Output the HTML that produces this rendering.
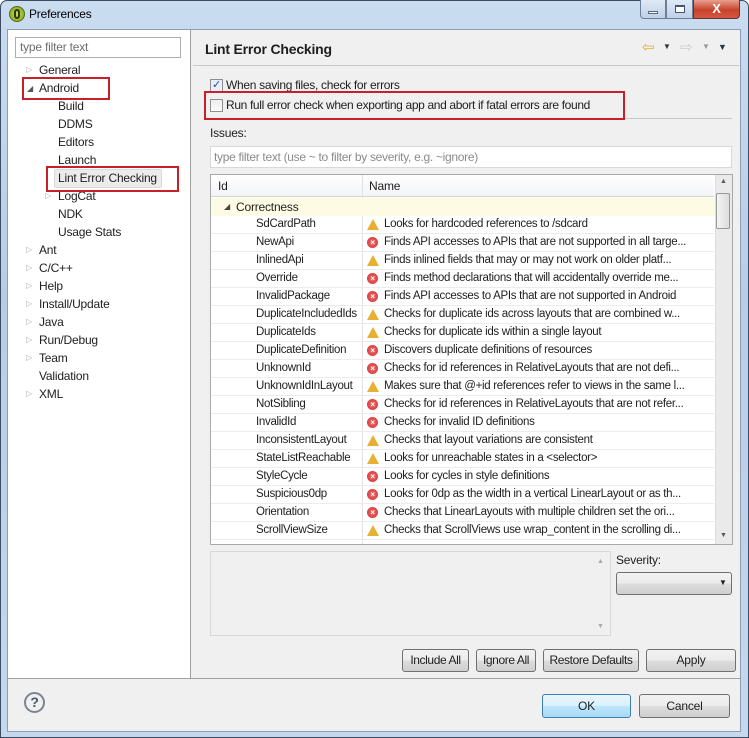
<!DOCTYPE html>
<html><head><style>
*{box-sizing:border-box;margin:0;padding:0}
body{width:749px;height:738px;position:relative;overflow:hidden;background:#fff;font-family:"Liberation Sans",sans-serif;font-size:12px;letter-spacing:-0.2px;color:#1e1e1e}
.a{position:absolute;white-space:nowrap}
.frame{left:0;top:0;width:749px;height:738px;background:linear-gradient(#c9dcf0,#b7cde6 40%,#c4d8ee);border:1px solid #3c4d63;border-radius:7px 7px 0 0}
.btn{position:absolute;border:1px solid #707070;border-radius:3px;background:linear-gradient(#f2f2f2,#ebebeb 50%,#dddddd 51%,#cfcfcf);text-align:center;font-size:12px;white-space:nowrap}
.row{position:absolute;left:211px;width:503px;height:18px;border-bottom:1px solid #ececec;white-space:nowrap;font-size:11.5px;letter-spacing:-0.3px}
.row .id{position:absolute;left:45px;top:2px;width:106px;overflow:hidden}
.row .nm{position:absolute;left:173px;top:2px;width:330px;overflow:hidden}
.ic{position:absolute;left:156px;top:3px;width:11px;height:11px}
</style></head><body>
<div class="a frame"></div>
<div class="a" style="left:9px;top:6px;width:16px;height:16px;border-radius:50%;background:radial-gradient(#c8e05a,#7a9a1a);border:1px solid #556b10"></div>
<div class="a" style="left:14px;top:9px;width:6px;height:10px;border:2px solid #2d3a08;border-radius:3px"></div>
<div class="a" style="left:29px;top:7px;font-size:12px;color:#000">Preferences</div>
<div class="a" style="left:640px;top:0;width:26px;height:19px;border:1px solid #6b7f99;border-top:none;border-radius:0 0 0 4px;background:linear-gradient(#dfe9f5,#bfd1e8)"></div>
<div class="a" style="left:648px;top:11px;width:10px;height:3px;background:#fff;border:1px solid #55667d"></div>
<div class="a" style="left:666px;top:0;width:27px;height:19px;border:1px solid #6b7f99;border-top:none;background:linear-gradient(#dfe9f5,#bfd1e8)"></div>
<div class="a" style="left:675px;top:5px;width:10px;height:8px;border:1px solid #44556b;border-top-width:2px;background:#fff"></div>
<div class="a" style="left:693px;top:0;width:47px;height:19px;border:1px solid #6b3030;border-top:none;border-radius:0 0 4px 0;background:linear-gradient(#e8a08f,#c8432b 55%,#d3583f);color:#fff;font-weight:bold;text-align:center;font-size:13px;line-height:17px">X</div>
<div class="a" style="left:7px;top:29px;width:734px;height:703px;background:#f0f0f0;border:1px solid #8d9db3"></div>
<div class="a" style="left:8px;top:30px;width:183px;height:648px;background:#fff;border-right:1px solid #a0a0a0"></div>
<div class="a" style="left:8px;top:678px;width:733px;height:1px;background:#a0a0a0"></div>
<div class="a" style="left:15px;top:37px;width:166px;height:21px;border:1px solid #abadb3;background:#fff;color:#6d6d6d;padding:2px 4px">type filter text</div>
<div>
<div class="a" style="left:26px;top:65px;color:#aaa;font-size:8px">▷</div><div class="a" style="left:39px;top:63px">General</div>
<div class="a" style="left:27px;top:84px;color:#555;font-size:8px">◢</div><div class="a" style="left:39px;top:81px">Android</div>
<div class="a" style="left:58px;top:99px">Build</div>
<div class="a" style="left:58px;top:117px">DDMS</div>
<div class="a" style="left:58px;top:135px">Editors</div>
<div class="a" style="left:58px;top:153px">Launch</div>
<div class="a" style="left:54px;top:169px;width:108px;height:19px;background:#ececec;border:1px solid #dadada;border-radius:2px"></div>
<div class="a" style="left:58px;top:171px">Lint Error Checking</div>
<div class="a" style="left:45px;top:191px;color:#aaa;font-size:8px">▷</div><div class="a" style="left:58px;top:189px">LogCat</div>
<div class="a" style="left:58px;top:207px">NDK</div>
<div class="a" style="left:58px;top:225px">Usage Stats</div>
<div class="a" style="left:26px;top:245px;color:#aaa;font-size:8px">▷</div><div class="a" style="left:39px;top:243px">Ant</div>
<div class="a" style="left:26px;top:263px;color:#aaa;font-size:8px">▷</div><div class="a" style="left:39px;top:261px">C/C++</div>
<div class="a" style="left:26px;top:281px;color:#aaa;font-size:8px">▷</div><div class="a" style="left:39px;top:279px">Help</div>
<div class="a" style="left:26px;top:299px;color:#aaa;font-size:8px">▷</div><div class="a" style="left:39px;top:297px">Install/Update</div>
<div class="a" style="left:26px;top:317px;color:#aaa;font-size:8px">▷</div><div class="a" style="left:39px;top:315px">Java</div>
<div class="a" style="left:26px;top:335px;color:#aaa;font-size:8px">▷</div><div class="a" style="left:39px;top:333px">Run/Debug</div>
<div class="a" style="left:26px;top:353px;color:#aaa;font-size:8px">▷</div><div class="a" style="left:39px;top:351px">Team</div>
<div class="a" style="left:39px;top:369px">Validation</div>
<div class="a" style="left:26px;top:389px;color:#aaa;font-size:8px">▷</div><div class="a" style="left:39px;top:387px">XML</div>
</div>
<div class="a" style="left:22px;top:77px;width:88px;height:23px;border:2px solid #c8202a"></div>
<div class="a" style="left:46px;top:166px;width:133px;height:26px;border:2px solid #c8202a"></div>
<div class="a" style="left:205px;top:41px;font-size:14px;font-weight:bold">Lint Error Checking</div>
<div class="a" style="left:642px;top:38px;color:#e0b030;font-size:15px">⇦</div>
<div class="a" style="left:663px;top:42px;font-size:8px;color:#333">▼</div>
<div class="a" style="left:680px;top:38px;color:#ccc;font-size:15px">⇨</div>
<div class="a" style="left:702px;top:42px;font-size:8px;color:#999">▼</div>
<div class="a" style="left:718px;top:42px;font-size:9px;color:#2b3550">▼</div>
<div class="a" style="left:193px;top:65px;width:546px;height:1px;background:#c8c8c8"></div>
<div class="a" style="left:210px;top:79px;width:13px;height:13px;border:1px solid #8f8f8f;background:#e8eefa;color:#1f4ca0;font-size:11px;line-height:11px;text-align:center">✓</div>
<div class="a" style="left:226px;top:78px;letter-spacing:-0.3px">When saving files, check for errors</div>
<div class="a" style="left:210px;top:99px;width:13px;height:13px;border:1px solid #8f8f8f;background:linear-gradient(#eee,#fafafa)"></div>
<div class="a" style="left:226px;top:98px;letter-spacing:-0.35px">Run full error check when exporting app and abort if fatal errors are found</div>
<div class="a" style="left:204px;top:91px;width:421px;height:29px;border:2px solid #c8202a"></div>
<div class="a" style="left:625px;top:118px;width:107px;height:1px;background:#c8c8c8"></div>
<div class="a" style="left:210px;top:126px">Issues:</div>
<div class="a" style="left:210px;top:146px;width:522px;height:22px;border:1px solid #d8d8d8;background:#fff;color:#8a8a8a;padding:3px 3px;letter-spacing:-0.3px">type filter text (use ~ to filter by severity, e.g. ~ignore)</div>
<div class="a" style="left:210px;top:174px;width:523px;height:371px;border:1px solid #a8a8a8;background:#fff;overflow:hidden"></div>
<div class="a" style="left:211px;top:175px;width:503px;height:22px;background:linear-gradient(#fff,#f3f4f6);border-bottom:1px solid #d5d5d5"></div>
<div class="a" style="left:362px;top:175px;width:1px;height:369px;background:#e2e2e2"></div>
<div class="a" style="left:218px;top:179px">Id</div>
<div class="a" style="left:369px;top:179px">Name</div>
<div class="a" style="left:715px;top:175px;width:17px;height:369px;background:#eaeaea;border-left:1px solid #ddd"></div>
<div class="a" style="left:720px;top:178px;font-size:7px;color:#555">▲</div>
<div class="a" style="left:716px;top:193px;width:14px;height:36px;border:1px solid #9a9a9a;border-radius:2px;background:linear-gradient(90deg,#f4f4f4,#dcdcdc)"></div>
<div class="a" style="left:720px;top:532px;font-size:7px;color:#555">▼</div>
<div class="a" style="left:211px;top:198px;width:504px;height:18px;background:#fdfbe4"></div>
<div class="a" style="left:224px;top:202px;font-size:8px;color:#444">◢</div>
<div class="a" style="left:236px;top:200px">Correctness</div>
<div id="rows"></div>
<div class="a" style="left:210px;top:551px;width:401px;height:85px;border:1px solid #d8d8d8;background:#f0f0f0"></div>
<div class="a" style="left:597px;top:558px;font-size:7px;color:#aaa">▲</div>
<div class="a" style="left:597px;top:623px;font-size:7px;color:#aaa">▼</div>
<div class="a" style="left:616px;top:553px">Severity:</div>
<div class="btn" style="left:616px;top:572px;width:116px;height:23px;border-radius:3px"></div>
<div class="a" style="left:719px;top:578px;font-size:8px">▼</div>
<div class="btn" style="left:402px;top:649px;width:67px;height:23px;line-height:21px;letter-spacing:-0.4px">Include All</div>
<div class="btn" style="left:476px;top:649px;width:60px;height:23px;line-height:21px;letter-spacing:-0.4px">Ignore All</div>
<div class="btn" style="left:543px;top:649px;width:96px;height:23px;line-height:21px;letter-spacing:-0.4px">Restore Defaults</div>
<div class="btn" style="left:646px;top:649px;width:90px;height:23px;line-height:21px">Apply</div>
<div class="a" style="left:24px;top:692px;width:21px;height:21px;border-radius:50%;border:2px solid #7a8494;color:#4a5568;font-weight:bold;font-size:14px;text-align:center;line-height:17px">?</div>
<div class="btn" style="left:542px;top:694px;width:89px;height:24px;line-height:22px;border-color:#3c7fb1;background:linear-gradient(#eaf6fd,#d9f0fc 50%,#bee6fd 51%,#a7d9f5)">OK</div>
<div class="btn" style="left:639px;top:694px;width:91px;height:24px;line-height:22px">Cancel</div>
<script>
var R=[["SdCardPath",0,"Looks for hardcoded references to /sdcard"],["NewApi",1,"Finds API accesses to APIs that are not supported in all targe..."],["InlinedApi",0,"Finds inlined fields that may or may not work on older platf..."],["Override",1,"Finds method declarations that will accidentally override me..."],["InvalidPackage",1,"Finds API accesses to APIs that are not supported in Android"],["DuplicateIncludedIds",0,"Checks for duplicate ids across layouts that are combined w..."],["DuplicateIds",0,"Checks for duplicate ids within a single layout"],["DuplicateDefinition",1,"Discovers duplicate definitions of resources"],["UnknownId",1,"Checks for id references in RelativeLayouts that are not defi..."],["UnknownIdInLayout",0,"Makes sure that @+id references refer to views in the same l..."],["NotSibling",1,"Checks for id references in RelativeLayouts that are not refer..."],["InvalidId",1,"Checks for invalid ID definitions"],["InconsistentLayout",0,"Checks that layout variations are consistent"],["StateListReachable",0,"Looks for unreachable states in a &lt;selector&gt;"],["StyleCycle",1,"Looks for cycles in style definitions"],["Suspicious0dp",1,"Looks for 0dp as the width in a vertical LinearLayout or as th..."],["Orientation",1,"Checks that LinearLayouts with multiple children set the ori..."],["ScrollViewSize",0,"Checks that ScrollViews use wrap_content in the scrolling di..."]];
var h="";R.forEach(function(r,i){var t=216+i*18;var ic=r[1]?'<div class="ic" style="border-radius:50%;background:radial-gradient(#f07070,#d02a2a);color:#fff;font-size:8px;line-height:11px;text-align:center;font-weight:bold">×</div>':'<div class="ic" style="width:0;height:0;border-left:6px solid transparent;border-right:6px solid transparent;border-bottom:11px solid #e8b030"></div>';
h+='<div class="row" style="top:'+t+'px"><div class="id">'+r[0]+'</div>'+ic+'<div class="nm">'+r[2]+'</div></div>';});
document.getElementById("rows").outerHTML=h;
</script>
</body></html>
